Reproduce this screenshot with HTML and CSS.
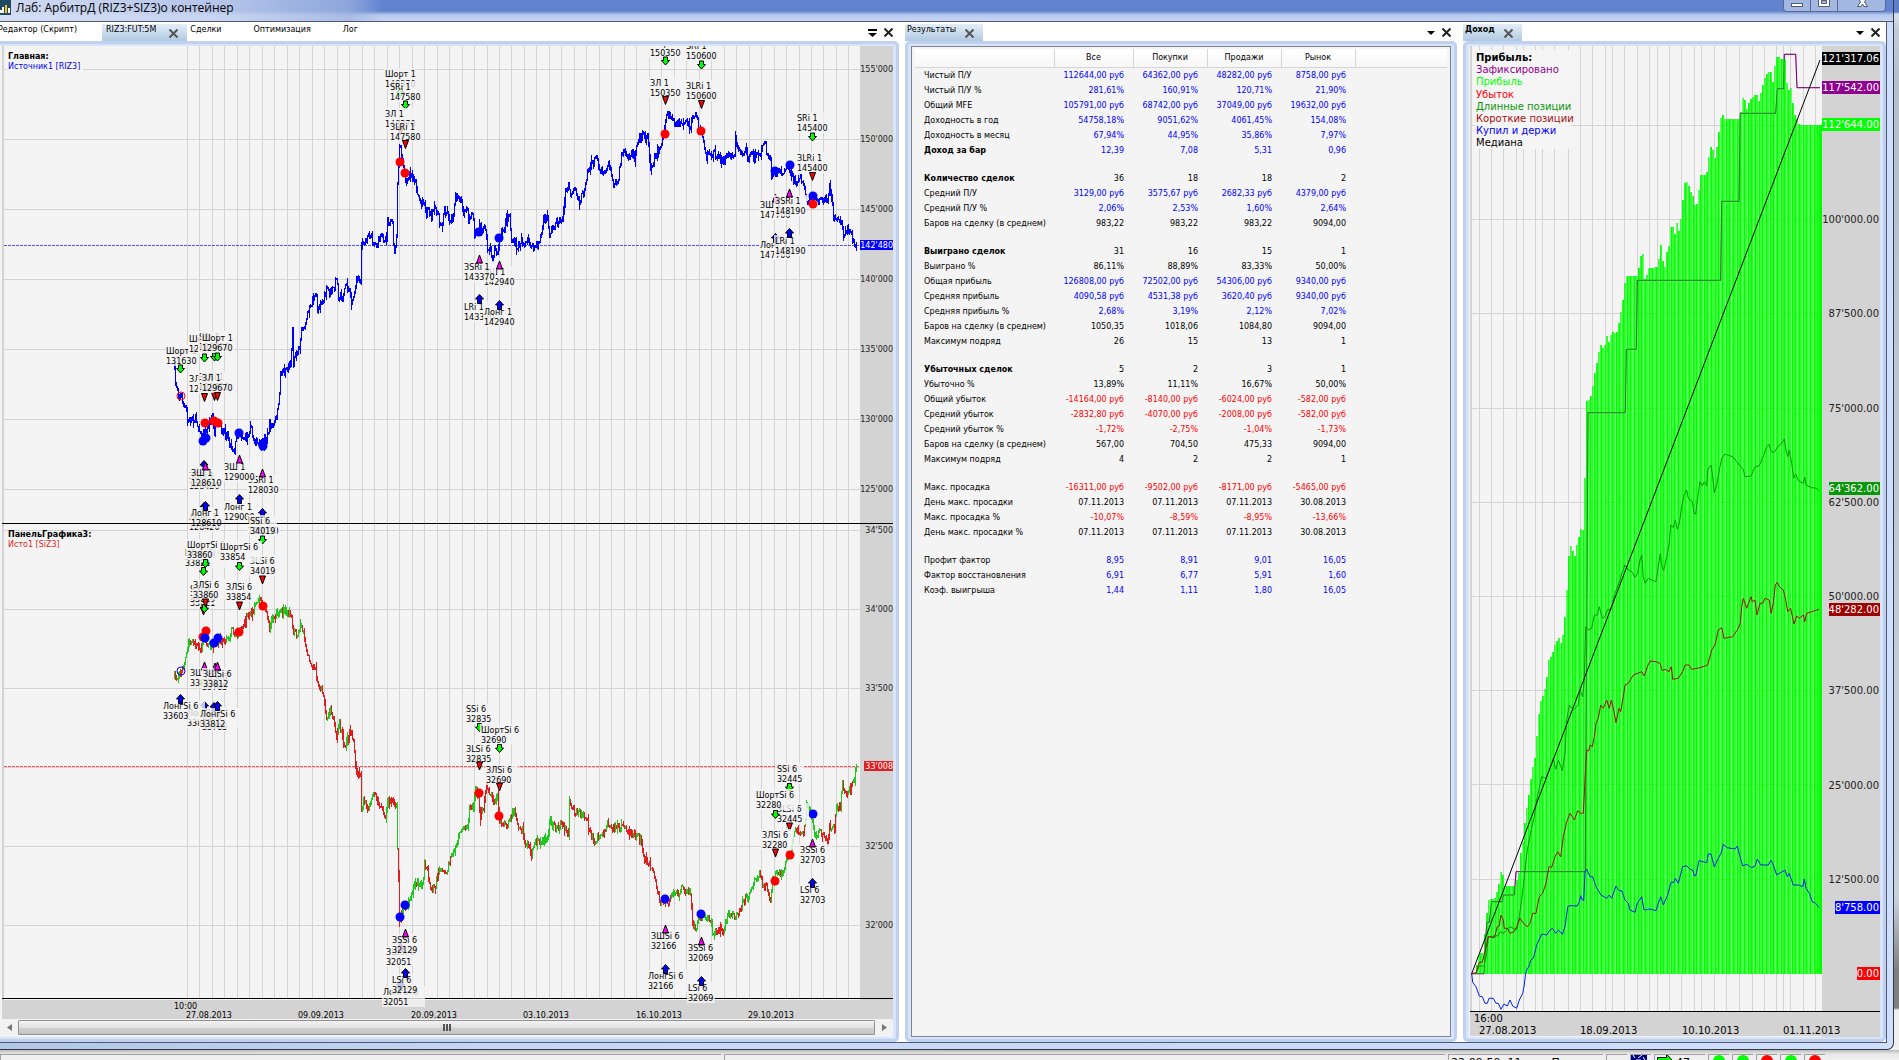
FILE: index.html
```html
<!DOCTYPE html>
<html lang="ru">
<head>
  <meta charset="UTF-8">
  <meta name="viewport" content="width=device-width, initial-scale=1.0">
  <title>Лаб: АрбитрД (RIZ3+SIZ3)</title>
  <link rel="stylesheet" href="styles.css">
</head>
<body>
  <div class="window">
    <header class="title-bar">
      <svg class="app-icon" width="11" height="15" viewBox="0 0 11 15">
        <rect width="11" height="15" fill="#1f4a66"/>
        <rect x="0" y="10" width="2" height="3" fill="#fff"/>
        <rect x="2" y="7" width="2" height="6" fill="#fff"/>
        <rect x="5" y="5" width="2" height="8" fill="#ffc20e"/>
        <rect x="8" y="8" width="2" height="5" fill="#fff"/>
      </svg>
      <h1>Лаб: АрбитрД (RIZ3+SIZ3)о контейнер</h1>
      <div class="window-buttons">
        <button class="win-btn" aria-label="Свернуть"><svg width="14" height="12"><rect x="1.500" y="3.500" width="11" height="3" fill="#fff" stroke="#555c6e"/></svg></button>
        <button class="win-btn" aria-label="Развернуть"><svg width="14" height="12"><path d="M1.500-2.500h11v9h-11zM4.500.5h5v3h-5z" fill="#fff" fill-rule="evenodd" stroke="#555c6e"/></svg></button>
        <button class="win-btn close" aria-label="Закрыть"><svg width="14" height="12"><path d="M2.500 6.500L5.500 2 2.500-3H6l1.500 2.500L9-3h3.500l-3 5 3 4.500H9L7.500 4 6 6.500z" fill="#fff" stroke="#555c6e"/></svg></button>
      </div>
    </header>

    <main class="client">
      <!-- Price charts -->
      <section class="panel panel-chart">
        <div class="tabs">
          <button class="tab first">Редактор (Скрипт)</button>
          <button class="tab active">RIZ3:FUT:5M <svg class="x" width="9" height="9"><path d="M.5.5l8 8M8.500.5l-8 8"/></svg></button>
          <button class="tab">Сделки</button>
          <button class="tab">Оптимизация</button>
          <button class="tab">Лог</button>
          <div class="tab-tools">
            <button aria-label="Список"><svg width="9" height="9"><path d="M0 1h9v2H0zM0 5h9L4.500 9z"/></svg></button>
            <button aria-label="Закрыть"><svg class="x dark" width="9" height="9"><path d="M.5.5l8 8M8.500.5l-8 8"/></svg></button>
          </div>
        </div>
        <div class="frame">
          <svg class="chart" id="priceChart" viewBox="0 46 893 973"></svg>
          <div class="scrollbar">
            <button aria-label="Влево"><svg width="5" height="7"><path d="M5 0v7L0 3.500z"/></svg></button>
            <div class="thumb"><i></i><i></i><i></i></div>
            <button aria-label="Вправо"><svg width="5" height="7"><path d="M0 0v7l5-3.500z"/></svg></button>
          </div>
        </div>
      </section>

      <!-- Results table -->
      <section class="panel panel-results">
        <div class="tabs">
          <button class="tab active">Результаты <svg class="x" width="9" height="9"><path d="M.5.5l8 8M8.500.5l-8 8"/></svg></button>
          <div class="tab-tools">
            <button aria-label="Список"><svg width="9" height="9"><path d="M1 3h8L5 7z"/></svg></button>
            <button aria-label="Закрыть"><svg class="x dark" width="9" height="9"><path d="M.5.5l8 8M8.500.5l-8 8"/></svg></button>
          </div>
        </div>
        <div class="frame">
          <div class="results">
            <table>
              <colgroup><col class="c-name"><col class="c-all"><col class="c-val"><col class="c-val"><col class="c-val"><col></colgroup>
              <thead>
                <tr><th></th><th>Все</th><th>Покупки</th><th>Продажи</th><th>Рынок</th><th></th></tr>
              </thead>
              <tbody>
                <tr class="pos"><td>Чистый П/У</td><td>112644,00 руб</td><td>64362,00 руб</td><td>48282,00 руб</td><td>8758,00 руб</td></tr>
                <tr class="pos"><td>Чистый П/У %</td><td>281,61%</td><td>160,91%</td><td>120,71%</td><td>21,90%</td></tr>
                <tr class="pos"><td>Общий MFE</td><td>105791,00 руб</td><td>68742,00 руб</td><td>37049,00 руб</td><td>19632,00 руб</td></tr>
                <tr class="pos"><td>Доходность в год</td><td>54758,18%</td><td>9051,62%</td><td>4061,45%</td><td>154,08%</td></tr>
                <tr class="pos"><td>Доходность в месяц</td><td>67,94%</td><td>44,95%</td><td>35,86%</td><td>7,97%</td></tr>
                <tr class="pos head"><td>Доход за бар</td><td>12,39</td><td>7,08</td><td>5,31</td><td>0,96</td></tr>
                <tr class="gap"><td></td></tr>
                <tr class="head"><td>Количество сделок</td><td>36</td><td>18</td><td>18</td><td>2</td></tr>
                <tr class="pos"><td>Средний П/У</td><td>3129,00 руб</td><td>3575,67 руб</td><td>2682,33 руб</td><td>4379,00 руб</td></tr>
                <tr class="pos"><td>Средний П/У %</td><td>2,06%</td><td>2,53%</td><td>1,60%</td><td>2,64%</td></tr>
                <tr><td>Баров на сделку (в среднем)</td><td>983,22</td><td>983,22</td><td>983,22</td><td>9094,00</td></tr>
                <tr class="gap"><td></td></tr>
                <tr class="head"><td>Выиграно сделок</td><td>31</td><td>16</td><td>15</td><td>1</td></tr>
                <tr><td>Выиграно %</td><td>86,11%</td><td>88,89%</td><td>83,33%</td><td>50,00%</td></tr>
                <tr class="pos"><td>Общая прибыль</td><td>126808,00 руб</td><td>72502,00 руб</td><td>54306,00 руб</td><td>9340,00 руб</td></tr>
                <tr class="pos"><td>Средняя прибыль</td><td>4090,58 руб</td><td>4531,38 руб</td><td>3620,40 руб</td><td>9340,00 руб</td></tr>
                <tr class="pos"><td>Средняя прибыль %</td><td>2,68%</td><td>3,19%</td><td>2,12%</td><td>7,02%</td></tr>
                <tr><td>Баров на сделку (в среднем)</td><td>1050,35</td><td>1018,06</td><td>1084,80</td><td>9094,00</td></tr>
                <tr><td>Максимум подряд</td><td>26</td><td>15</td><td>13</td><td>1</td></tr>
                <tr class="gap"><td></td></tr>
                <tr class="head"><td>Убыточных сделок</td><td>5</td><td>2</td><td>3</td><td>1</td></tr>
                <tr><td>Убыточно %</td><td>13,89%</td><td>11,11%</td><td>16,67%</td><td>50,00%</td></tr>
                <tr class="neg"><td>Общий убыток</td><td>-14164,00 руб</td><td>-8140,00 руб</td><td>-6024,00 руб</td><td>-582,00 руб</td></tr>
                <tr class="neg"><td>Средний убыток</td><td>-2832,80 руб</td><td>-4070,00 руб</td><td>-2008,00 руб</td><td>-582,00 руб</td></tr>
                <tr class="neg"><td>Средний убыток %</td><td>-1,72%</td><td>-2,75%</td><td>-1,04%</td><td>-1,73%</td></tr>
                <tr><td>Баров на сделку (в среднем)</td><td>567,00</td><td>704,50</td><td>475,33</td><td>9094,00</td></tr>
                <tr><td>Максимум подряд</td><td>4</td><td>2</td><td>2</td><td>1</td></tr>
                <tr class="gap"><td></td></tr>
                <tr class="neg"><td>Макс. просадка</td><td>-16311,00 руб</td><td>-9502,00 руб</td><td>-8171,00 руб</td><td>-5465,00 руб</td></tr>
                <tr><td>День макс. просадки</td><td>07.11.2013</td><td>07.11.2013</td><td>07.11.2013</td><td>30.08.2013</td></tr>
                <tr class="neg"><td>Макс. просадка %</td><td>-10,07%</td><td>-8,59%</td><td>-8,95%</td><td>-13,66%</td></tr>
                <tr><td>День макс. просадки %</td><td>07.11.2013</td><td>07.11.2013</td><td>07.11.2013</td><td>30.08.2013</td></tr>
                <tr class="gap"><td></td></tr>
                <tr class="pos"><td>Профит фактор</td><td>8,95</td><td>8,91</td><td>9,01</td><td>16,05</td></tr>
                <tr class="pos"><td>Фактор восстановления</td><td>6,91</td><td>6,77</td><td>5,91</td><td>1,60</td></tr>
                <tr class="pos"><td>Коэф. выигрыша</td><td>1,44</td><td>1,11</td><td>1,80</td><td>16,05</td></tr>
              </tbody>
            </table>
          </div>
        </div>
      </section>

      <!-- Income chart -->
      <section class="panel panel-income">
        <div class="tabs">
          <button class="tab active bold">Доход <svg class="x" width="9" height="9"><path d="M.5.5l8 8M8.500.5l-8 8"/></svg></button>
          <div class="tab-tools">
            <button aria-label="Список"><svg width="9" height="9"><path d="M1 3h8L5 7z"/></svg></button>
            <button aria-label="Закрыть"><svg class="x dark" width="9" height="9"><path d="M.5.5l8 8M8.500.5l-8 8"/></svg></button>
          </div>
        </div>
        <div class="frame">
          <svg class="chart" id="incomeChart" viewBox="1469 46 411 991"></svg>
        </div>
      </section>
    </main>
  </div>

  <footer class="status-bar">
    <div class="cell grow"></div>
    <div class="cell grow"></div>
    <div class="cell time"><span>22:09:50, 11</span><span>П</span></div>
    <div class="cell blank"></div>
    <div class="cell chip"><svg width="16" height="6"><rect width="16" height="6" fill="#000080"/><path d="M2 0l2 3M7 3l4-3M12 2l2 3M5 5h5" stroke="#fff"/></svg></div>
    <div class="cell count"><svg width="15" height="6"><path d="M.5 6V2.500h9V-1L15 5v1z" fill="#0f0" stroke="#000"/></svg><span>47</span></div>
    <div class="cell dot on"></div>
    <div class="cell dot on"></div>
    <div class="cell dot off"></div>
    <div class="cell dot on"></div>
    <div class="cell dot off"></div>
    <div class="tail"></div>
  </footer>

  <script src="script.js"></script>
</body>
</html>
```
FILE: styles.css
```css
* {
    box-sizing: border-box;
}
body {
    margin: 0;
    height: 100vh;
    display: flex;
    flex-direction: column;
    overflow: hidden;
    font-family: "DejaVu Sans", Verdana, sans-serif;
    font-size: 8px;
    color: #000;
    background: linear-gradient(#5d7fc9 0, #5d7fc9 12px, #d9dfe8 14px, #c2ccd9 30px, #b4c0d0 80px, #c8d0da 900px, #808080 970px, #808080 1008px, #f0f0f0 1010px);
}
button {
    font: inherit;
    color: inherit;
    border: none;
    background: none;
    padding: 0;
}

/* Window */
.window {
    flex: 1;
    min-height: 0;
    display: flex;
    flex-direction: column;
    margin-right: 5px;
    padding: 0 6px 6px 0;
    background: linear-gradient(90deg, #b4c6e6, #c8d8f4 30%, #cfdffb);
    border-right: 1px solid #333b48;
    border-bottom: 1px solid #333b48;
    border-radius: 0 0 7px 0;
}
.title-bar {
    height: 22px;
    margin-right: -6px;
    display: flex;
    align-items: flex-start;
    background:
        linear-gradient(90deg, rgba(214, 223, 243, 0.95) 0, rgba(200, 212, 240, 0.8) 230px, rgba(160, 180, 224, 0.7) 350px, rgba(97, 128, 207, 0) 385px),
        linear-gradient(#6082cf 0, #6082cf 11px, #b9caee 15px, #c5d4f3 21px);
    border-bottom: 1px solid #4f5a73;
}
.title-bar h1 {
    margin: 0 0 0 5px;
    font: 12px/15px "Open Sans", "Noto Sans", sans-serif;
}
.window-buttons {
    display: flex;
    margin: 0 7px 0 auto;
    border: 1px solid #5b6890;
    border-top: none;
    border-radius: 0 0 4px 4px;
    background: #a3b7e3;
}
.win-btn {
    width: 27px;
    height: 11px;
    overflow: hidden;
    border-right: 1px solid #5b6890;
    line-height: 0;
}
.win-btn.close {
    width: 47px;
    border-right: none;
}

.client {
    flex: 1;
    min-height: 0;
    display: flex;
    gap: 6px;
    background: #fff;
    border-right: 1px solid #4f5a73;
    border-bottom: 1px solid #4f5a73;
}
.panel {
    min-width: 0;
    display: flex;
    flex-direction: column;
}
.panel-chart {
    flex: 899 1 0;
}
.panel-results {
    flex: 552 1 0;
}
.panel-income {
    flex: 423 1 0;
}

/* Tabs */
.tabs {
    display: flex;
    height: 19px;
    padding-top: 2px;
    white-space: nowrap;
}
.tab {
    display: flex;
    align-items: flex-start;
    padding: 0 29px 0 3px;
    line-height: 12px;
}
.tab.first {
    margin-left: -5px;
    padding-right: 25px;
}
.tab.active {
    gap: 9px;
    padding: 0 9px 0 2px;
    background: linear-gradient(#e4eef8, #b0c9e2);
}
.panel-chart .tab.active {
    gap: 13px;
    padding-left: 4px;
}
.tab.bold {
    font-weight: bold;
}
.tab .x {
    margin-top: 5px;
}
.x {
    fill: none;
    stroke: #555;
    stroke-width: 2px;
}
.x.dark {
    stroke: #222;
}
.tab-tools {
    display: flex;
    gap: 7px;
    margin-left: auto;
    padding: 4px 6px 0 0;
}
.tab-tools button {
    height: 9px;
    line-height: 0;
}

.frame {
    flex: 1;
    min-height: 0;
    display: flex;
    flex-direction: column;
    padding: 2px 3px;
    border: 3px solid #bfd1ee;
    border-radius: 5px;
    background: #d8e4f9;
}
.panel-chart .frame {
    border-left: none;
    padding-left: 0;
    border-radius: 0 5px 5px 0;
}
.chart {
    flex: 1;
    min-height: 0;
    width: 100%;
    background: #f4f4f4;
}
.chart text {
    white-space: pre;
}
#incomeChart {
    font-size: 10px;
}

.scrollbar {
    display: flex;
    align-items: center;
    height: 18px;
    padding-bottom: 1px;
    background: #f2f2f2;
}
.scrollbar button {
    width: 18px;
    line-height: 0;
    fill: #777;
}
.thumb {
    flex: 1;
    display: flex;
    justify-content: center;
    align-items: center;
    gap: 1px;
    height: 15px;
    border: 1px solid #929292;
    border-radius: 1px;
    background: linear-gradient(#f3f3f3, #e2e2e2 50%, #cfcfcf 55%, #c4c4c4);
}
.thumb i {
    width: 2px;
    height: 7px;
    background: #555;
}

/* Results */
.results {
    flex: 1;
    padding: 2px 3px;
    background: #f4f4f4;
    border: 1px solid #80848f;
}
.results table {
    width: 100%;
    table-layout: fixed;
    border-collapse: collapse;
}
.c-name {
    width: 139px;
}
.c-all {
    width: 79px;
}
.c-val {
    width: 74px;
}
.results th {
    height: 18px;
    padding: 0;
    font-weight: normal;
    background: linear-gradient(#fff, #f7f7f7);
    border-right: 1px solid #d5d5d5;
    border-bottom: 1px solid #d5d5d5;
}
.results th:last-child {
    border-right: none;
}
.results td {
    height: 15px;
    padding: 0 9px 0 0;
    line-height: 15px;
    text-align: right;
    white-space: nowrap;
}
.results td:first-child {
    padding: 0 0 0 9px;
    text-align: left;
}
.results .gap td {
    height: 13px;
}
.head td:first-child {
    font-weight: bold;
}
.pos td + td {
    color: #00f;
}
.neg td + td {
    color: #f00;
}

/* Status bar */
.status-bar {
    display: flex;
    gap: 3px;
    height: 10px;
    padding-top: 4px;
    overflow: hidden;
    background: linear-gradient(#b9b9b9, #e8e8e8 4px, #f0f0f0);
    font: 11px/12px "DejaVu Sans", sans-serif;
}
.cell {
    flex: none;
    height: 16px;
    border-top: 1px solid #a0a0a0;
    border-left: 1px solid #a0a0a0;
    background: #f0f0f0;
}
.grow {
    flex: 1;
}
.time {
    display: flex;
    gap: 30px;
    width: 155px;
    padding: 2px 0 0 2px;
}
.blank {
    width: 21px;
}
.chip {
    width: 21px;
    line-height: 0;
}
.count {
    display: flex;
    gap: 4px;
    width: 51px;
    padding-left: 2px;
}
.count span {
    padding-top: 2px;
}
.dot {
    width: 21px;
    padding: 0 4px;
}
.dot::before {
    content: "";
    display: block;
    width: 12px;
    height: 12px;
    border-radius: 50%;
    background: #0f0;
}
.dot.off::before {
    background: #f00;
}
.tail {
    width: 71px;
}
```
FILE: script.js
```js
const NS = 'http://www.w3.org/2000/svg';
const price = document.getElementById('priceChart');
const income = document.getElementById('incomeChart');

function add(parent, name, attrs, text) {
  const el = document.createElementNS(NS, name);
  for (const key in attrs) el.setAttribute(key, attrs[key]);
  if (text !== undefined) el.textContent = text;
  parent.appendChild(el);
  return el;
}

function rect(svg, x, y, w, h, fill, opacity = 1) {
  add(svg, 'rect', { x: x, y: y, width: w, height: h, fill: fill, opacity: opacity });
}

function label(svg, x, y, text, fill = '#000', anchor = 'start', weight = 'normal') {
  add(svg, 'text', { x: x, y: y, fill: fill, 'text-anchor': anchor, 'font-weight': weight }, text);
}

// "x,y x,y ..." -> [[x, y], ...]
function parse(str) {
  return str.trim().split(/\s+/).map(p => p.split(',').map(Number));
}

function valueAt(points, x) {
  for (let i = 1; i < points.length; i++) {
    if (x <= points[i][0]) {
      const [x0, y0] = points[i - 1];
      const [x1, y1] = points[i];
      return y0 + (y1 - y0) * (x - x0) / (x1 - x0 || 1);
    }
  }
  return points[points.length - 1][1];
}

let seed = 7;
function rnd() {
  seed = (seed * 16807) % 2147483647;
  return seed / 2147483647;
}

// One high-low bar per pixel column
function drawBars(svg, str, colors) {
  const points = parse(str);
  const paths = colors.map(() => '');
  let prev = points[0][1];
  let dir = 0;
  for (let x = points[0][0]; x <= points[points.length - 1][0]; x++) {
    const y = valueAt(points, x) + (rnd() - 0.5) * 8;
    const spike = rnd() > 0.75 ? 6 : 2;
    const top = Math.round(Math.min(prev, y) - rnd() * spike);
    const bottom = Math.round(Math.max(prev, y) + rnd() * spike) + 1;
    if (rnd() > 0.35) dir = y < prev ? 0 : 1;
    paths[dir % colors.length] += `M${x} ${top}h1V${bottom}h-1z`;
    prev = y;
  }
  paths.forEach((d, i) => add(svg, 'path', { d: d, fill: colors[i], 'shape-rendering': 'crispEdges' }));
}

/* ---------- Price charts ---------- */

const rizData = `174,368 175,383 177,387 179,397 181,395 183,404 186,412 187,422 190,418 195,418 199,427 201,440 204,433 207,427
212,415 213,430 218,423 223,433 227,433 230,445 234,449 237,433 240,433 243,438 247,437 250,423 252,437 255,440 258,445 263,443
267,435 269,424 273,426 276,415 278,407 280,373 282,370 285,369 287,368 290,363 292,328 293,363 295,352 299,350 301,325 304,325
307,313 310,308 312,298 316,297 317,310 320,300 323,301 325,293 327,288 329,293 334,288 336,275 338,295 342,297 345,285 348,288
351,300 353,297 355,285 357,277 360,280 361,242 363,246 366,237 368,233 372,240 375,245 380,238 386,237 387,218 392,225 393,247
395,249 396,233 397,187 398,167 399,144 401,155 403,167 405,180 407,183 409,174 414,178 417,192 420,202 423,200 426,213 428,207
431,217 433,210 436,208 439,222 442,222 444,208 447,213 450,223 453,210 455,197 460,200 463,213 467,207 468,215 473,215 474,233
479,227 485,230 487,247 490,248 492,257 494,248 497,255 499,240 503,230 506,218 509,215 511,240 517,248 521,238 524,247 528,240
532,248 537,245 541,233 543,220 547,218 549,233 555,223 562,218 565,193 568,185 571,197 574,190 579,200 583,192 587,170 592,163
597,155 599,170 605,170 607,163 610,165 612,183 617,183 621,155 623,152 627,158 631,150 634,158 637,140 642,135 647,135 649,157
650,167 654,158 659,147 663,137 665,123 666,115 672,117 675,128 678,120 682,127 685,122 690,128 692,115 697,117 698,128 702,135
706,155 710,158 714,150 717,157 723,160 727,155 734,153 735,137 738,150 742,153 746,150 749,158 755,153 759,157 762,143 765,145
767,158 770,157 771,178 777,170 780,173 784,170 789,168 793,182 797,182 799,175 803,188 807,202 813,197 820,200 827,198 829,183
831,200 833,215 837,220 841,222 843,235 847,227 850,230 853,242 856,248`;

const siData = `174,677 177,675 180,675 183,665 185,655 188,643 192,640 193,645 197,647 200,648 203,637 207,642 212,647 217,638
222,640 228,638 232,630 235,633 239,632 243,623 247,617 252,613 255,602 259,595 262,605 266,613 269,627 273,615 277,613 282,608
287,612 291,615 293,632 297,633 300,627 303,633 306,653 310,663 315,670 318,683 323,693 326,718 330,710 333,717 336,737 339,722
343,743 348,742 349,728 353,740 354,750 355,768 358,775 360,772 361,810 363,800 367,808 370,803 374,792 378,800 382,812 385,817
387,805 392,803 396,807 397,850 398,877 399,922 401,913 404,907 407,905 411,895 415,882 418,882 422,887 424,863 427,868 428,877
431,890 435,885 438,872 442,868 445,874 449,862 453,853 456,843 459,833 462,827 467,827 469,807 473,807
475,787 478,797 480,820 483,807 486,785 490,793 493,803 497,798 499,820 503,825 508,823 512,812 515,813 518,828 522,830 524,845
528,842 531,857 533,843 540,842 547,838 549,823 555,827 562,823 568,837 569,803 573,810 580,813 586,817 588,827 593,840 597,837
602,837 606,823 611,828 618,828 624,828 628,833 632,832 637,837 640,840 643,858 648,862 653,870 656,888 660,902 665,900 669,902
673,890 677,893 682,885 687,892 690,892 692,920 695,932 698,918 703,917 708,918 711,920 712,933 718,928 723,930 727,915 735,915
740,910 742,902 747,898 752,887 755,878 760,873 762,888 766,887 770,898 772,878 777,873 783,872 785,860 790,853 793,832 797,828
800,833 804,830 806,803 809,807 812,820 814,837 818,830 823,835 827,845 829,827 834,828 836,807 840,807 842,783 845,795 850,790
853,782 856,766`;

function drawPriceGrid() {
  rect(price, 0, 46, 893, 973, '#f4f4f4');
  for (let i = 0; i < 54; i++) rect(price, Math.round(187 + 12.48 * i), 46, 1, 953, '#d3d3d3');
  for (let i = 0; i < 7; i++) rect(price, 4, 69 + 70 * i, 856, 1, '#d3d3d3');
  for (let i = 0; i < 6; i++) rect(price, 4, 530 + 79 * i, 856, 1, '#d3d3d3');
  rect(price, 2, 46, 2, 973, '#d3d3d3');
  rect(price, 860, 46, 33, 973, '#d3d3d3');
  rect(price, 2, 1000, 891, 19, '#d3d3d3');
}

const COLORS = { sell: '#0f0', stop: '#f00', cover: '#f0f', buy: '#00f' };
const SHAPES = {
  sell: 'M-2-3.500H2V0H4L0 4.500-4 0h2z',
  stop: 'M-3-4H3L0 4z',
  cover: 'M-3 4H3L0-4z',
  buy: 'M-2 4.500H2V0H4L0-4.500-4 0h2z'
};

function signal(type, ix, iy, tx, ty, line1, line2) {
  const w = Math.max(line1.length * 5, line2.length * 5) + 3;
  rect(price, tx - 1, ty - 9, w, 21, '#f4f4f4', 0.8);
  add(price, 'path', { d: SHAPES[type], fill: COLORS[type], stroke: '#000', 'stroke-width': 1, transform: `translate(${ix} ${iy})` });
  label(price, tx, ty, line1);
  label(price, tx, ty + 10, line2);
}

function dot(x, y, fill) {
  add(price, 'circle', { cx: x, cy: y, r: 4.5, fill: fill });
}

function ring(x, y, stroke) {
  add(price, 'circle', { cx: x, cy: y, r: 4, fill: 'none', stroke: stroke });
}

drawPriceGrid();
add(price, 'path', { d: 'M4 245.5H860', stroke: '#00f', 'stroke-dasharray': '3 1', opacity: 0.65 });
add(price, 'path', { d: 'M4 766.5H860', stroke: '#f00', 'stroke-dasharray': '3 1', opacity: 0.65 });
drawBars(price, rizData, ['#00f']);
drawBars(price, siData, ['#1ec81e', '#e01e1e']);

[[205, 423], [214, 421], [218, 423], [400, 162], [405, 173], [665, 134], [701, 131]].forEach(p => dot(p[0], p[1], '#f00'));
[[203, 441], [206, 438], [239, 433], [263, 446], [479, 232], [499, 238], [775, 171], [790, 165], [813, 196]].forEach(p => dot(p[0], p[1], '#00f'));
dot(813, 204, '#f00');
[[203, 637], [206, 631], [263, 606], [239, 632], [479, 793], [499, 816], [775, 881], [790, 855]].forEach(p => dot(p[0], p[1], '#f00'));
[[205, 638], [214, 643], [218, 638], [400, 917], [405, 905], [665, 899], [701, 914], [813, 814]].forEach(p => dot(p[0], p[1], '#00f'));
ring(181, 396, '#f00');
ring(181, 671, '#00f');

signal('sell', 180.5, 368.5, 166, 354, 'Шорт 1', '131630');
signal('sell', 204.5, 357.5, 189, 342, 'Шорт 1', '129660');
signal('sell', 214.5, 356.5, 199, 340, 'SRi 1', '129810');
signal('sell', 217.5, 356.5, 202, 341, 'Шорт 1', '129670');
signal('stop', 204.5, 397.5, 189, 382, 'ЗЛ 1', '129660');
signal('stop', 214.5, 396.5, 199, 380, 'ЗLRi 1', '129810');
signal('stop', 217.5, 396.5, 202, 381, 'ЗЛ 1', '129670');
signal('buy', 204, 465, 189, 479, 'ЗSRi 1', '128420');
signal('cover', 205.5, 466, 191, 476, 'ЗШ 1', '128610');
signal('buy', 204, 507, 189, 520, 'Лонг 1', '128420');
signal('buy', 205.5, 506, 191, 516, 'Лонг 1', '128610');
signal('cover', 262.5, 473, 248, 483, 'ЗSRi 1', '128030');
signal('cover', 239.5, 459, 224, 470, 'ЗШ 1', '129000');
signal('buy', 239.5, 499, 224, 510, 'Лонг 1', '129000');
signal('buy', 262.5, 513, 248, 524, 'LRi 1', '128030');
signal('sell', 400.5, 92, 385, 77, 'Шорт 1', '148370');
signal('sell', 405.5, 104.5, 390, 90, 'SRi 1', '147580');
signal('stop', 400.5, 131, 385, 117, 'ЗЛ 1', '148370');
signal('stop', 405.5, 144.5, 390, 130, 'ЗLRi 1', '147580');
signal('cover', 499.5, 265, 484, 275, 'ЗШ 1', '142940');
signal('cover', 479.5, 259, 464, 270, 'ЗSRi 1', '143370');
signal('buy', 479.5, 299, 464, 310, 'LRi 1', '143370');
signal('buy', 499.5, 305, 484, 315, 'Лонг 1', '142940');
signal('sell', 665.5, 60.5, 650, 46, 'Шорт 1', '150350');
signal('stop', 665.5, 100.5, 650, 86, 'ЗЛ 1', '150350');
signal('sell', 701.5, 64.5, 686, 49, 'SRi 1', '150600');
signal('stop', 701.5, 104.5, 686, 89, 'ЗLRi 1', '150600');
signal('sell', 812.5, 136.5, 797, 121, 'SRi 1', '145400');
signal('stop', 812.5, 176.5, 797, 161, 'ЗLRi 1', '145400');
signal('cover', 775.5, 198, 760, 208, 'ЗШ 1', '147700');
signal('cover', 789.5, 193, 775, 204, 'ЗSRi 1', '148190');
signal('buy', 775.5, 238, 760, 248, 'Лонг 1', '147700');
signal('buy', 789.5, 233, 775, 244, 'LRi 1', '148190');

// Panel separators go under the lower panel's labels
rect(price, 2, 523, 891, 1, '#000');
rect(price, 2, 998, 891, 1, '#000');

signal('sell', 262.5, 539.5, 250, 524, 'SSi 6', '34019');
signal('stop', 262.5, 580, 250, 564, 'ЗLSi 6', '34019');
signal('sell', 203.5, 571, 185, 556, 'ШортSi 6', '33821');
signal('sell', 205.5, 563, 187, 548, 'ШортSi 6', '33860');
signal('sell', 239.5, 566, 220, 550, 'ШортSi 6', '33854');
signal('stop', 239.5, 606, 226, 590, 'ЗЛSi 6', '33854');
signal('stop', 203.5, 611, 190, 596, 'ЗЛSi 6', '33821');
signal('sell', 204.5, 608, 190, 592, 'SSi 6', '33819');
signal('stop', 205.5, 603, 193, 588, 'ЗЛSi 6', '33860');
signal('cover', 204.5, 666, 190, 676, 'ЗШSi 6', '33819');
signal('cover', 215, 667, 202, 680, 'ЗSSi 6', '33785');
signal('cover', 217.5, 666, 203, 677, 'ЗШSi 6', '33812');
signal('buy', 204.5, 706, 187, 716, 'ЛонгSi 6', '33819');
signal('buy', 180.5, 699, 163, 709, 'ЛонгSi 6', '33603');
signal('buy', 214, 707, 202, 720, 'LSi 6', '33785');
signal('buy', 217.5, 706, 200, 717, 'ЛонгSi 6', '33812');
signal('cover', 400.5, 946, 386, 955, 'ЗШSi 6', '32051');
signal('cover', 405.5, 933, 392, 943, 'ЗSSi 6', '32129');
signal('buy', 400.5, 985, 383, 995, 'ЛонгSi 6', '32051');
signal('buy', 405.5, 973, 392, 983, 'LSi 6', '32129');
signal('sell', 479.5, 727, 466, 712, 'SSi 6', '32835');
signal('stop', 479.5, 766, 466, 752, 'ЗLSi 6', '32835');
signal('sell', 499.5, 748, 481, 733, 'ШортSi 6', '32690');
signal('stop', 499.5, 787, 486, 773, 'ЗЛSi 6', '32690');
signal('cover', 665.5, 929, 651, 939, 'ЗШSi 6', '32166');
signal('buy', 665.5, 969, 648, 979, 'ЛонгSi 6', '32166');
signal('cover', 701.5, 941, 688, 951, 'ЗSSi 6', '32069');
signal('buy', 701.5, 981, 688, 991, 'LSi 6', '32069');
signal('stop', 789.5, 827, 777, 812, 'ЗLSi 6', '32445');
signal('sell', 789.5, 787, 777, 772, 'SSi 6', '32445');
signal('sell', 775.5, 814, 756, 798, 'ШортSi 6', '32280');
signal('stop', 775.5, 853, 762, 838, 'ЗЛSi 6', '32280');
signal('cover', 812.5, 843, 800, 853, 'ЗSSi 6', '32703');
signal('buy', 812.5, 883, 800, 893, 'LSi 6', '32703');

rect(price, 7, 51, 76, 21, '#f4f4f4');
label(price, 8, 59, 'Главная:', '#000', 'start', 'bold');
label(price, 8, 69, 'Источник1 [RIZ3]', '#00f');
label(price, 8, 537, 'ПанельГрафика3:', '#000', 'start', 'bold');
label(price, 8, 547, 'Исто1 [SiZ3]', '#e01e1e');

["155'000", "150'000", "145'000", "140'000", "135'000", "130'000", "125'000"].forEach((t, i) => label(price, 893, 72 + 70 * i, t, '#222', 'end'));
["34'500", "34'000", "33'500", '', "32'500", "32'000"].forEach((t, i) => label(price, 893, 533 + 79 * i, t, '#222', 'end'));
rect(price, 860, 240, 33, 10, '#00f');
label(price, 893, 248, "142'480", '#fff', 'end');
rect(price, 864, 761, 29, 10, '#e01e1e');
label(price, 893, 769, "33'008", '#fff', 'end');
label(price, 174, 1009, '10:00');
['27.08.2013', '09.09.2013', '20.09.2013', '03.10.2013', '16.10.2013', '29.10.2013'].forEach((t, i) => {
  label(price, Math.round(186 + 112.4 * i), 1018, t);
});

/* ---------- Income chart ---------- */

// Series are kept in thirds of a pixel from (1440, 760)
function series(str) {
  return parse(str).map(p => [1440 + p[0] / 3, 760 + p[1] / 3]);
}

function line(str, stroke, opacity = 1) {
  const d = series(str).map(p => p[0].toFixed(1) + ',' + p[1].toFixed(1)).join(' ');
  add(income, 'polyline', { points: d, fill: 'none', stroke: stroke, 'stroke-width': 1, opacity: opacity });
}

const profit = series(`105,641 110,620 118,580 130,580 137,500 145,420 165,415 175,385 183,335 190,345 193,378 225,378 237,340
243,280 250,240 258,160 265,120 275,40 285,-5 293,-95 300,-170 308,-190 318,-225 327,-300 337,-315 343,-342 355,-365 362,-365
365,-325 372,-410 378,-450 384,-570 388,-625 392,-645 397,-630 405,-613 412,-650 423,-692 433,-690 437,-1005 440,-1077
450,-1080 458,-1115 465,-1160 473,-1200 480,-1240 485,-1250 492,-1225 500,-1275 508,-1250 515,-1285 530,-1280 540,-1325
547,-1370 552,-1395 557,-1453 595,-1452 600,-1510 610,-1520 613,-1440 620,-1450 627,-1475 655,-1480 660,-1540 665,-1550
668,-1500 675,-1480 682,-1530 690,-1550 695,-1630 700,-1590 706,-1575 711,-1610 716,-1580 722,-1615 728,-1670 735,-1730
743,-1737 750,-1710 760,-1690 767,-1655 775,-1680 780,-1755 800,-1757 806,-1805 815,-1847 825,-1805 833,-1850 840,-1910
847,-1945 852,-1923 900,-1923 908,-1980 912,-2000 920,-1950 930,-1980 950,-2000 955,-1970 965,-2010 977,-2055 992,-2070
998,-2025 1007,-2100 1013,-2115 1020,-2105 1037,-2102 1040,-2040 1045,-1995 1050,-2030 1056,-2005 1062,-1940 1070,-1925
1078,-1905 1146,-1905`);

const fixed = `95,641 132,641 140,487 148,487 155,425 187,425 190,405 223,405 228,335 436,335 444,-1042 556,-1042 559,-1232 589,-1232
592,-1439 842,-1439 845,-1676 897,-1676 901,-1940 1007,-1940 1012,-2014 1031,-2014 1033,-2117 1067,-2117 1071,-2017 1140,-2017`;

rect(income, 1469, 46, 411, 991, '#f4f4f4');
[118, 154, 190, 229, 250, 286, 307, 343, 385, 421, 457, 496, 517, 553, 592, 628, 652, 688, 724, 763, 784, 823, 859, 898, 937, 973, 1009, 1030, 1051, 1090, 1126]
  .forEach(x => rect(income, Math.round(1440 + x / 3), 46, 1, 965, '#d3d3d3'));
for (let i = 0; i < 9; i++) rect(income, 1472, Math.round(125 + 94.2 * i), 350, 1, '#d3d3d3');
rect(income, 1470, 46, 2, 965, '#d3d3d3');

// Fixed profit shows through the bars
line(fixed, '#900090');

const shades = [0.78, 0.78, 1, 0.78, 0.55, 0.78, 1, 0.78, 0.78, 0.55, 1];
for (let x = 1475; x < 1822; x++) {
  const top = Math.round(valueAt(profit, Math.floor(x / 2) * 2 + 1));
  rect(income, x, top, 1, 974 - top, '#0f0', x > 1818 ? 1 : shades[x % shades.length]);
}
line(fixed, '#500050', 0.4);

line(`95,641 108,640 118,618 132,618 140,580 145,530 175,527 180,515 190,520 210,500 230,510 238,470 245,420 255,330 262,270
275,205 283,170 290,120 305,50 318,55 340,-5 347,28 355,0 367,32 375,-20 380,-120 388,-165 400,-150 415,-165 420,-210 428,-190
433,-240 437,-400 445,-390 455,-395 463,-435 472,-435 478,-460 487,-425 495,-430 503,-452 512,-450 525,-500 540,-540 547,-565
555,-585 565,-570 575,-565 585,-548 593,-560 600,-600 605,-615 610,-550 615,-530 625,-545 635,-540 648,-535 655,-580 661,-620
666,-580 671,-568 680,-610 688,-650 692,-705 700,-698 706,-720 712,-692 718,-710 725,-760 732,-795 740,-810 745,-785 757,-775
762,-740 767,-738 775,-800 780,-835 787,-822 793,-835 800,-822 803,-870 813,-885 818,-850 823,-802 830,-825 837,-865 845,-905
855,-918 878,-910 890,-895 910,-872 915,-850 933,-852 945,-880 957,-882 970,-910 980,-940 987,-947 993,-925 1003,-923 1012,-938
1025,-950 1033,-963 1038,-930 1043,-910 1048,-930 1055,-890 1061,-845 1067,-858 1075,-838 1090,-830 1094,-848 1098,-825
1115,-817 1130,-815 1137,-808`, '#0a960a');

line(`95,641 108,638 118,607 127,607 135,575 145,530 163,533 172,500 178,498 183,465 190,480 193,505 202,505 210,520 222,515
230,500 240,475 250,490 262,500 270,490 278,460 288,460 298,410 308,400 318,370 327,320 335,322 345,290 353,275 362,290 370,230
380,185 390,160 403,180 413,152 422,160 430,160 435,60 440,-30 446,-27 450,-45 457,-40 463,-70 468,-110 475,-125 482,-165
490,-155 500,-180 508,-155 514,-180 522,-145 528,-112 537,-155 542,-145 550,-190 555,-225 565,-230 580,-255 605,-265 613,-252
622,-280 630,-297 648,-295 660,-290 667,-268 675,-272 687,-265 694,-280 698,-242 715,-245 728,-265 735,-285 747,-285 755,-272
780,-277 803,-285 815,-330 825,-345 835,-390 845,-397 852,-365 878,-370 895,-395 901,-410 905,-460 910,-485 920,-455 933,-490
937,-475 945,-480 951,-435 960,-470 968,-470 975,-485 988,-480 993,-440 1000,-470 1006,-525 1012,-533 1018,-520 1030,-510
1037,-480 1043,-445 1052,-455 1062,-408 1070,-432 1078,-425 1090,-435 1094,-415 1100,-440 1115,-445 1137,-452`, '#a01010');

line(`95,641 98,667 108,680 118,708 127,710 135,730 142,730 147,715 160,715 168,730 175,730 183,748 192,732 202,738 210,720
218,738 230,745 238,720 248,700 252,680 257,640 262,625 267,620 272,600 280,595 290,555 305,522 320,525 330,510 337,505 347,520
355,510 367,523 375,500 383,440 390,437 412,438 418,425 422,407 427,420 431,422 435,335 440,327 450,350 458,350 468,380 483,405
500,415 508,405 515,415 528,378 537,392 545,392 555,420 565,430 570,450 585,457 592,430 605,410 612,450 630,447 648,452 655,430
662,410 670,435 683,405 693,367 702,367 706,355 715,370 728,320 740,317 750,328 758,330 763,348 768,345 777,302 800,308 805,282
813,282 823,320 835,295 843,280 850,253 862,263 885,267 892,258 900,290 908,318 920,313 935,323 945,318 952,297 962,315 985,315
993,300 1000,315 1010,345 1035,330 1042,350 1048,340 1060,375 1075,375 1088,380 1093,357 1098,385 1108,400 1117,425 1127,430
1137,443`, '#0020f0');

line('95,641 1140,-2100', '#000');

rect(income, 1822, 46, 58, 991, '#d3d3d3');
rect(income, 1470, 1012, 410, 24, '#d3d3d3');
rect(income, 1470, 1011, 410, 1, '#000');
rect(income, 1475, 50, 96, 99, '#f4f4f4', 0.95);
[['Прибыль:', '#000'], ['Зафиксировано', '#900090'], ['Прибыль', '#0f0'], ['Убыток', '#f00'], ['Длинные позиции', '#0a960a'],
  ['Короткие позиции', '#a01010'], ['Купил и держи', '#00f'], ['Медиана', '#000']].forEach((item, i) => {
  label(income, 1476, Math.round(61 + 12.2 * i), item[0], item[1], 'start', i ? 'normal' : 'bold');
});

[["100'000.00", 223], ["87'500.00", 317], ["75'000.00", 412], ["62'500.00", 506], ["50'000.00", 600], ["37'500.00", 694],
  ["25'000.00", 789], ["12'500.00", 883]].forEach(t => label(income, 1879, t[1], t[0], '#222', 'end'));
[["121'317.06", 58, 58, '#000'], ["117'542.00", 87, 58, '#900090'], ["112'644.00", 124, 58, '#0f0'], ["64'362.00", 488, 51, '#0a960a'],
  ["48'282.00", 609, 51, '#a00000'], ["8'758.00", 907, 45, '#00f'], ['0.00', 973, 23, '#f00']].forEach(t => {
  rect(income, 1880 - t[2], t[1] - 6, t[2], 13, t[3]);
  label(income, 1879, t[1] + 4, t[0], '#fff', 'end');
});
label(income, 1474, 1022, '16:00');
[['27.08.2013', 1479], ['18.09.2013', 1580], ['10.10.2013', 1682], ['01.11.2013', 1783]].forEach(t => label(income, t[1], 1034, t[0]));
```
